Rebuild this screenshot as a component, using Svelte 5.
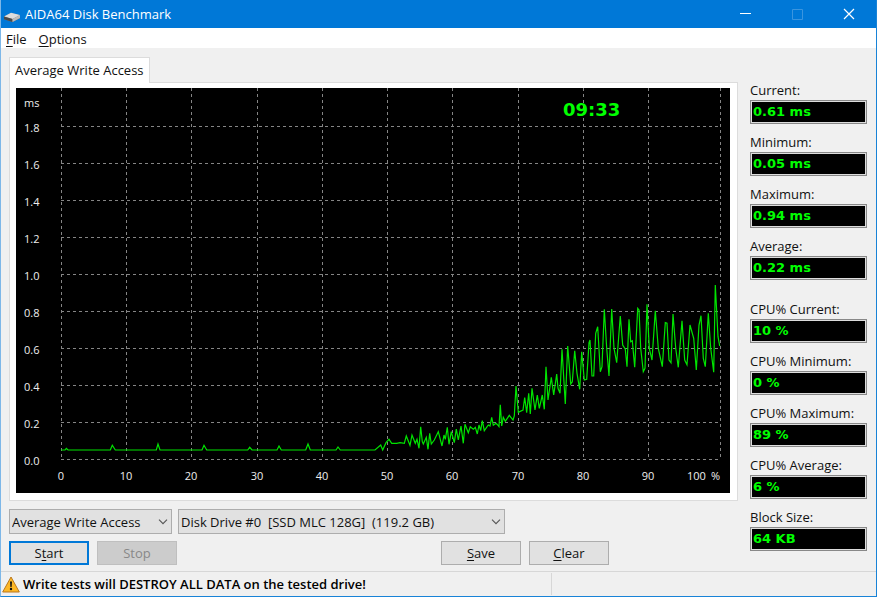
<script>
	const stats = [
		{ id: 'current', label: 'Current:', value: '0.61 ms' },
		{ id: 'minimum', label: 'Minimum:', value: '0.05 ms' },
		{ id: 'maximum', label: 'Maximum:', value: '0.94 ms' },
		{ id: 'average', label: 'Average:', value: '0.22 ms' },
		{ id: 'cpu_current', label: 'CPU% Current:', value: '10 %', spaced: true },
		{ id: 'cpu_minimum', label: 'CPU% Minimum:', value: '0 %' },
		{ id: 'cpu_maximum', label: 'CPU% Maximum:', value: '89 %' },
		{ id: 'cpu_average', label: 'CPU% Average:', value: '6 %' },
		{ id: 'block_size', label: 'Block Size:', value: '64 KB' }
	]

	const tests = ['Average Write Access']
	const drives = ['Disk Drive #0\u00a0 [SSD MLC 128G]\u00a0 (119.2 GB)']

	// Graph grid
	const columns = [45, 110, 175, 241, 306, 371, 436, 502, 567, 632, 704]
	const rows = [1.8, 1.6, 1.4, 1.2, 1.0, 0.8, 0.6, 0.4, 0.2, 0.0]

	function rowY (value) {
		return 371.5 - value * 185
	}

	// Trace segments: samples are thirds of a unit from the segment's origin
	const segments = [
		{
			x: 45, y: 362,
			samples: [[0,0],[12,0],[16,-5],[21,0],[148,0],[154,-14],[163,0],[286,0],[291,-18],[297,0],[423,0],[429,-14],[437,0],[560,0],[566,-8],[573,0],[648,0],[654,-12],[661,0],[734,0],[741,-18],[748,0],[825,0],[831,-9],[838,0],[890,0]]
		},
		{
			x: 344, y: 292,
			samples: [[0,210],[45,210],[62,195],[68,210],[78,188],[87,178],[95,190],[110,190],[120,188],[133,190],[139,168],[150,196],[156,165],[166,190],[171,178],[177,205],[182,140],[187,185],[190,192],[199,172],[204,208],[209,160],[214,192],[223,180],[235,155],[246,198],[252,165],[256,178],[262,142],[267,193],[274,155],[283,188],[289,147],[295,180],[303,138],[310,190],[315,133],[325,158],[331,140],[340,148],[346,142],[352,162],[357,135],[362,152],[367,122],[373,152],[385,135],[390,138],[395,112],[400,136],[408,130],[413,135],[417,140],[421,74],[425,138],[430,112],[436,124],[448,106],[459,120]]
		},
		{
			x: 464, y: 242,
			samples: [[103,258],[108,168],[115,247],[129,240],[134,203],[140,248],[146,190],[151,252],[156,175],[165,240],[172,195],[178,235],[187,195],[193,238],[198,110],[204,210],[214,142],[221,195],[230,132],[234,175],[240,190],[246,58],[256,222],[263,48],[272,162],[277,155],[284,62],[291,130],[299,178],[305,65],[313,150],[320,148],[327,38]]
		},
		{
			x: 574, y: 182,
			samples: [[0,210],[6,318],[11,318],[17,190],[23,170],[31,305],[36,290],[43,118],[50,235],[57,318],[65,117],[72,235],[80,278],[91,138],[98,225],[106,238],[111,290],[117,148],[122,215],[127,212],[134,292],[143,115],[147,120],[152,235],[160,305],[165,295],[171,103],[178,235],[186,270],[196,122],[205,235],[217,290],[226,158],[231,160],[237,270],[243,278],[249,132],[257,235],[265,292],[276,152],[284,270],[291,284],[300,165],[311,205],[319,300],[327,165],[333,137],[340,265],[346,290],[355,130],[362,235],[371,307],[376,45],[384,200],[389,228]]
		}
	]

	const trace = segments
		.flatMap(s => s.samples.map(([x, y]) => `${(s.x + x / 3).toFixed(1)},${(s.y + y / 3).toFixed(1)}`))
		.join(' ')
</script>

{#snippet chevron()}
	<svg class="chevron" width="10" height="6" viewBox="0 0 10 6" aria-hidden="true">
		<path d="M1 .7 5 4.7 9 .7" fill="none" stroke="#555" stroke-width="1.1" />
	</svg>
{/snippet}

<div class="window">
	<header>
		<svg width="16" height="10" viewBox="0 0 16 10" aria-hidden="true">
			<path d="M0 4.5 7 1l9 2.2v3L8.5 10 0 7.3z" fill="#777" />
			<path d="M0 4.4 7 .8l9 2.3-7.5 3.8z" fill="#ddd" />
			<path d="M0 4.4 8.5 6.9V10L0 7.3z" fill="#4a4a4a" />
			<path d="M8.5 6.9 16 3.1v3L8.5 10z" fill="#bcbcbc" />
		</svg>
		<h1>AIDA64 Disk Benchmark</h1>
		<div class="controls">
			<button aria-label="Minimize">
				<svg width="12" height="12" viewBox="0 0 12 12"><path d="M1 5.5h11" stroke="#fff" /></svg>
			</button>
			<button aria-label="Maximize" disabled>
				<svg width="12" height="12" viewBox="0 0 12 12"><path d="M1.5 1.5h10v10h-10z" fill="none" stroke="#3a95df" /></svg>
			</button>
			<button aria-label="Close">
				<svg width="12" height="12" viewBox="0 0 12 12"><path d="m1 1 10 10M11 1 1 11" stroke="#fff" stroke-width="1.2" /></svg>
			</button>
		</div>
	</header>

	<nav>
		<button><u>F</u>ile</button>
		<button><u>O</u>ptions</button>
	</nav>

	<main>
		<section class="left">
			<div class="tabs" role="tablist">
				<button role="tab" aria-selected="true">Average Write Access</button>
			</div>
			<div class="panel" role="tabpanel">
				<svg class="graph" viewBox="0 0 714 405" role="img" aria-label="Write access time in ms">
					<rect width="714" height="405" fill="#000" />
					<g class="grid">
						{#each columns as x}
							<path d="M{x + 0.5} 0V371" />
						{/each}
						{#each rows as value}
							<path d="M45 {rowY(value)}H704" />
						{/each}
					</g>
					<g class="axis">
						<text x="8" y="19">ms</text>
						{#each rows as value}
							<text x="8" y={rowY(value) + 5}>{value.toFixed(1)}</text>
						{/each}
						{#each columns.slice(0, 10) as x, i}
							<text class="tick" {x} y="392">{i * 10}</text>
						{/each}
						<text x="671" y="392">100</text>
						<text x="695" y="392">%</text>
					</g>
					<polyline class="trace" points={trace} />
					<text class="time" x="547" y="28">09:33</text>
				</svg>
			</div>

			<div class="row selects">
				<div class="select test">
					<select aria-label="Test">
						{#each tests as test}
							<option>{test}</option>
						{/each}
					</select>
					{@render chevron()}
				</div>
				<div class="select drive">
					<select aria-label="Drive">
						{#each drives as drive}
							<option>{drive}</option>
						{/each}
					</select>
					{@render chevron()}
				</div>
			</div>
			<div class="row buttons">
				<button class="default">S<u>t</u>art</button>
				<button disabled>Stop</button>
				<button class="save"><u>S</u>ave</button>
				<button><u>C</u>lear</button>
			</div>
		</section>

		<aside>
			{#each stats as stat}
				<div class="stat" class:spaced={stat.spaced}>
					<label for={stat.id}>{stat.label}</label>
					<output id={stat.id}>{stat.value}</output>
				</div>
			{/each}
		</aside>
	</main>

	<footer>
		<div class="message">
			<svg width="18" height="17" viewBox="0 0 18 17" aria-hidden="true">
				<path d="M9 1 17.3 16H.7z" fill="#fdb827" stroke="#b9771c" stroke-linejoin="round" />
				<path d="M8 5.5h2l-.4 5.5H8.4z" fill="#111" />
				<circle cx="9" cy="13" r="1.2" fill="#111" />
			</svg>
			<strong>Write tests will DESTROY ALL DATA on the tested drive!</strong>
		</div>
		<div class="pane"></div>
	</footer>
</div>

<style>
	:global(body) {
		margin: 0;
	}

	.window, button, select {
		font-family: "Open Sans", "Noto Sans", sans-serif;
		font-size: 13px;
		color: #111;
	}

	.window {
		display: flex;
		flex-direction: column;
		box-sizing: border-box;
		min-height: 100vh;
		border: 1px solid #1883d7;
		border-left-color: #7db7e8;
		border-top: 0;
		background: #f0f0f0;
	}

	button {
		padding: 0;
		border: 0;
		background: none;
	}

	header {
		display: flex;
		align-items: center;
		height: 28px;
		padding-left: 3px;
		background: #0078d7;
	}

	header > svg {
		margin-top: 5px;
	}

	h1 {
		margin: 0 auto 0 5px;
		font-size: 13px;
		font-weight: normal;
		color: #fff;
	}

	.controls {
		display: flex;
		padding-right: 1px;
	}

	.controls button {
		display: flex;
		align-items: center;
		justify-content: center;
		width: 52px;
		height: 28px;
	}

	nav {
		display: flex;
		gap: 12px;
		height: 20px;
		padding-left: 5px;
		background: #fff;
	}

	nav button {
		line-height: 22px;
	}

	u {
		text-underline-offset: 2px;
	}

	main {
		display: flex;
		flex: 1;
		gap: 12px;
		padding: 9px 9px 0 8px;
	}

	.left {
		flex: 1;
		min-width: 0;
	}

	.tabs button {
		position: relative;
		display: block;
		height: 26px;
		padding: 0 5px 2px;
		margin-bottom: -1px;
		border: 1px solid #dcdcdc;
		border-bottom: 0;
		background: #fff;
	}

	.panel {
		padding: 5px 7px 7px 6px;
		border: 1px solid #dcdcdc;
		background: #fff;
	}

	.graph {
		display: block;
		width: 100%;
	}

	.grid path {
		stroke: #858585;
		stroke-dasharray: 3 3;
	}

	.axis text {
		font-family: "Open Sans", "Noto Sans", sans-serif;
		font-size: 11px;
		fill: #eee;
	}

	.axis .tick {
		text-anchor: middle;
	}

	.trace {
		fill: none;
		stroke: #00e400;
		stroke-width: 1.2;
	}

	.time {
		font: bold 18px "DejaVu Sans", sans-serif;
		fill: #0f0;
	}

	.row {
		display: flex;
		gap: 8px;
	}

	.selects {
		gap: 6px;
		margin: 8px 0 7px;
	}

	.select {
		position: relative;
	}

	.test {
		width: 163px;
	}

	.drive {
		width: 327px;
	}

	select {
		display: block;
		box-sizing: border-box;
		width: 100%;
		height: 25px;
		padding: 0 20px 0 2px;
		border: 1px solid #adadad;
		border-radius: 0;
		background: #e1e1e1;
		appearance: none;
	}

	.chevron {
		position: absolute;
		top: 10px;
		right: 4px;
		pointer-events: none;
	}

	.buttons button {
		width: 80px;
		height: 24px;
		border: 1px solid #adadad;
		background: #e1e1e1;
	}

	.buttons .default {
		border: 2px solid #0078d7;
	}

	.buttons button:disabled {
		border-color: #bfbfbf;
		background: #ccc;
		color: #888;
	}

	.buttons .save {
		margin-left: 256px;
	}

	aside {
		width: 117px;
		padding-top: 23px;
	}

	.stat {
		margin-bottom: 8px;
	}

	.spaced {
		margin-top: 19px;
	}

	label {
		display: block;
		line-height: 20px;
	}

	output {
		display: block;
		box-sizing: border-box;
		height: 24px;
		padding-left: 2px;
		border: 1px solid #888;
		outline: 1px solid #ddd;
		outline-offset: -2px;
		background: #000;
		color: #0f0;
		font: bold 13px/22px "DejaVu Sans", sans-serif;
	}

	footer {
		display: flex;
		height: 24px;
		border-top: 1px solid #d7d7d7;
	}

	.message {
		display: flex;
		flex: 550;
		align-items: center;
		gap: 3px;
		padding-left: 1px;
	}

	strong {
		font-weight: 600;
		color: #000;
	}

	.pane {
		flex: 325;
		margin: 1px 0;
		border-left: 1px solid #d7d7d7;
	}
</style>
